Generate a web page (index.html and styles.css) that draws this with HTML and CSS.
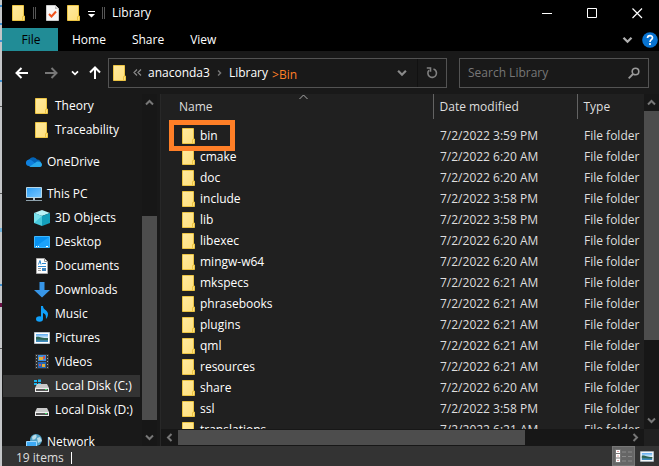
FILE: index.html
```html
<!DOCTYPE html>
<html lang="en">
<head>
<meta charset="utf-8">
<title>Library</title>
<link rel="stylesheet" href="styles.css">
</head>
<body>
<svg class="defs" aria-hidden="true">
  <defs>
    <linearGradient id="paper" x1="0" y1="0" x2="1" y2="1"><stop offset="0" stop-color="#ffeaa0"/><stop offset="1" stop-color="#ffdf7a"/></linearGradient>
    <linearGradient id="sky" x1="0" y1="0" x2="1" y2="1"><stop offset="0" stop-color="#2b9df4"/><stop offset="1" stop-color="#7cc8ff"/></linearGradient>
    <linearGradient id="photo" x1="0" y1="0" x2="0" y2="1"><stop offset="0" stop-color="#5aa9f0"/><stop offset=".5" stop-color="#d9eefa"/><stop offset=".55" stop-color="#35705c"/><stop offset="1" stop-color="#3f8fd0"/></linearGradient>
    <symbol id="folder" viewBox="0 0 14 16"><path d="M.5.5h11v10.500h1v4.500H.5z" fill="url(#paper)" stroke="#ecc443"/><path d="M10.500 15V11.500h1V8" fill="none" stroke="#ecc443"/></symbol>
    <symbol id="up" viewBox="0 0 9 7"><path d="M1 5.500l3.500-3.500L8 5.500" fill="none" stroke="currentColor" stroke-width="2"/></symbol>
    <symbol id="down" viewBox="0 0 9 7"><path d="M1 1.500L4.500 5 8 1.500" fill="none" stroke="currentColor" stroke-width="2"/></symbol>
    <symbol id="left" viewBox="0 0 7 9"><path d="M5.500 1L2 4.500 5.500 8" fill="none" stroke="currentColor" stroke-width="2"/></symbol>
    <symbol id="right" viewBox="0 0 7 9"><path d="M1.500 1L5 4.500 1.500 8" fill="none" stroke="currentColor" stroke-width="2"/></symbol>
    <symbol id="picture" viewBox="0 0 16 12"><path d="M.5.5h15v11H.5z" fill="#fff" stroke="#b9c4cc"/><path d="M2 2h12v8H2z" fill="url(#photo)"/><path d="M2 5c3-1 5 1 12 1.500V8C9 8 5 7 2 7z" fill="#2d6353"/></symbol>
    <symbol id="drive" viewBox="0 0 16 9"><path d="M3 0h10l2 4H1z" fill="#c9c9c9"/><path d="M1 4h14v4H1z" fill="#eee"/><path d="M2 5h12v2H2z" fill="#555"/><path d="M11 5h2v1h-2z" fill="#3fe069"/></symbol>
  </defs>
</svg>
<div class="desktop">
<main class="window">
  <header class="titlebar">
    <svg class="folder"><use href="#folder"/></svg>
    <span class="divider"></span>
    <button class="quick" aria-label="Properties"><svg width="13" height="16" viewBox="0 0 13 16"><path d="M.5.5h9l3 3v12H.5z" fill="#f7f7f7" stroke="#ccc"/><path d="M9 1v3h3z" fill="#bbb"/><path d="M3 9l2.500 2.500L10 6.500" fill="none" stroke="#f0521c" stroke-width="2"/></svg></button>
    <button class="quick" aria-label="New folder"><svg class="folder"><use href="#folder"/></svg></button>
    <button class="quick customize" aria-label="Customize toolbar"><svg width="7" height="7" viewBox="0 0 7 7"><path d="M0 0h7v1H0zM0 3h7L3.500 6.500z" fill="#fff"/></svg></button>
    <span class="divider"></span>
    <h1>Library</h1>
    <div class="controls">
      <button aria-label="Minimize"><svg width="11" height="11"><path d="M0 5.500h10" stroke="#fff"/></svg></button>
      <button aria-label="Maximize"><svg width="11" height="11"><path d="M.5.5h9v9h-9z" fill="none" stroke="#fff"/></svg></button>
      <button aria-label="Close"><svg width="11" height="11"><path d="M.5.5l9.500 9.500M10 .5L.5 10" stroke="#fff" stroke-width="1.200"/></svg></button>
    </div>
  </header>
  <nav class="tabs" aria-label="Ribbon">
    <button class="tab file">File</button>
    <button class="tab">Home</button>
    <button class="tab">Share</button>
    <button class="tab">View</button>
    <button class="expand" aria-label="Expand ribbon"><svg width="11" height="8"><use href="#down"/></svg></button>
    <button class="help" aria-label="Help"><svg width="16" height="16" viewBox="0 0 16 16"><circle cx="8" cy="8" r="7.800" fill="#0873d1"/><path d="M5.500 6c0-3.300 5-3.200 5-.2C10.500 7.800 8 7.600 8 10M8 11v2" fill="none" stroke="#fff" stroke-width="1.700"/></svg></button>
  </nav>
  <div class="navigation">
    <div class="history">
      <button aria-label="Back"><svg width="13" height="12" viewBox="0 0 13 12"><path d="M13 6H1.500M6.500 1l-5 5 5 5" fill="none" stroke="#fff" stroke-width="2"/></svg></button>
      <button aria-label="Forward" class="dim"><svg width="13" height="12" viewBox="0 0 13 12"><path d="M0 6h11.500M6.500 1l5 5-5 5" fill="none" stroke="currentColor" stroke-width="2"/></svg></button>
      <button aria-label="Recent locations" class="recent"><svg width="8" height="6"><use href="#down"/></svg></button>
      <button aria-label="Up"><svg width="12" height="13" viewBox="0 0 12 13"><path d="M6 13V1.500M1 6.500l5-5 5 5" fill="none" stroke="#fff" stroke-width="2"/></svg></button>
    </div>
    <div class="address">
      <svg class="folder"><use href="#folder"/></svg>
      <svg class="more" width="9" height="7" viewBox="0 0 9 7"><path d="M4 .5l-3 3 3 3M8 .5l-3 3 3 3" fill="none" stroke="#8a8a8a" stroke-width="1.200"/></svg>
      <a href="#">anaconda3</a>
      <svg class="crumb" width="5" height="8"><use href="#right"/></svg>
      <a href="#">Library</a>
      <span class="note">&gt;Bin</span>
      <button class="drop" aria-label="Previous locations"><svg width="10" height="8"><use href="#down"/></svg></button>
      <button class="refresh" aria-label="Refresh"><svg width="12" height="12" viewBox="0 0 12 12"><path d="M7.500 2A4.300 4.300 0 1 1 3 3.200M.8 1h3.700v3.700" fill="none" stroke="#808080" stroke-width="1.600"/></svg></button>
    </div>
    <div class="search">
      <input type="search" placeholder="Search Library" aria-label="Search Library">
      <svg width="12" height="12" viewBox="0 0 12 12"><circle cx="7.500" cy="4.500" r="3.300" fill="none" stroke="#9a9a9a" stroke-width="1.600"/><path d="M5 7L.7 11.300" stroke="#9a9a9a" stroke-width="1.800"/></svg>
    </div>
  </div>
  <div class="content">
    <nav class="tree" aria-label="Folders">
      <ul>
        <li class="deep"><a href="#"><svg class="folder"><use href="#folder"/></svg>Theory</a></li>
        <li class="deep"><a href="#"><svg class="folder"><use href="#folder"/></svg>Traceability</a></li>
        <li class="group"><a href="#"><svg viewBox="0 0 16 16"><path d="M2 9a4 4 0 0 1 1.500-4A4.500 4.500 0 0 1 11 5.500 4 4 0 0 1 15 9z" fill="#0364b8"/><path d="M0 10a3.500 3.500 0 0 1 5-4l8 6H3a3 3 0 0 1-3-2z" fill="#0f80dd"/><path d="M3 13l8-5.500c3-.5 5 1 5 3s-1 2.500-3 2.500z" fill="#28a8ea"/></svg>OneDrive</a></li>
        <li class="group"><a href="#"><svg viewBox="0 0 16 16"><path d="M.5 1.500h15v10H.5z" fill="url(#sky)" stroke="#b9d7e6"/><path d="M7 12h2v2h4v1H3v-1h4z" fill="#b8c5cc"/><path d="M0 14h16v1H0z" fill="#8fa2ad"/></svg>This PC</a></li>
        <li class="deep"><a href="#"><svg viewBox="0 0 16 16"><path d="M0 3l8-3 8 3-8 3z" fill="#b7f2f7"/><path d="M0 3l8 3v10l-8-3z" fill="#48c8dc"/><path d="M16 3L8 6v10l8-3z" fill="#139fbb"/><path d="M0 3l8 3-8 7z" fill="#79e1ec"/></svg>3D Objects</a></li>
        <li class="deep"><a href="#"><svg viewBox="0 0 16 16"><path d="M.5 2.500h15v11H.5z" fill="#0791f0" stroke="#3cb7ff"/><path d="M1 13L15 3v10z" fill="#1ca2fb"/><path d="M2 12.500h1m1 0h1m7 0h2" stroke="#fff"/></svg>Desktop</a></li>
        <li class="deep"><a href="#"><svg viewBox="0 0 16 16"><path d="M2.500.5h8l3 3v12h-11z" fill="#fff" stroke="#aaa"/><path d="M10.500.5v3h3" fill="none" stroke="#999"/><path d="M4.500 6.500l1.500-4 1 4M8 5.500h4M4 8.500h8" fill="none" stroke="#2c87ce"/><path d="M4 10.500h3m-3 2h3" stroke="#999"/><path d="M8 10h4v3H8z" fill="#3f84bd"/></svg>Documents</a></li>
        <li class="deep"><a href="#"><svg viewBox="0 0 16 16"><path d="M5.500 0h5v8H16l-8 7.500L0 8h5.500z" fill="#3796e8"/></svg>Downloads</a></li>
        <li class="deep"><a href="#"><svg viewBox="0 0 16 16"><ellipse cx="5.500" cy="13" rx="3.500" ry="2.800" fill="#10a0fa"/><path d="M7 0h2c0 4 5 4 5 8 0 2-1 4-2 5 0-3 0-5-3-6v6H7z" fill="#10a0fa"/></svg>Music</a></li>
        <li class="deep"><a href="#"><svg><use href="#picture"/></svg>Pictures</a></li>
        <li class="deep"><a href="#"><svg viewBox="0 0 16 16"><path d="M1 0h14v15H1z" fill="#333"/><path d="M4 1h8v6H4z" fill="#3c8ee0"/><path d="M4 8h8v6H4z" fill="#2266b7"/><path d="M5 3h4v3H5zM8 10h3v3H8z" fill="#e0ad36"/><path d="M9 2h2v3H9zM5 10h2v2H5z" fill="#c65158"/><path d="M2.500 1v14M13.500 1v14" stroke="#aaa" stroke-dasharray="1 2"/></svg>Videos</a></li>
        <li class="deep selected"><a href="#" aria-current="page"><svg viewBox="0 0 16 16"><path d="M0 2h3v2H0zM4 1.500h3V4H4zM0 5h3v2H0zM4 5h3v2.500H4z" fill="#18b5f1"/><use href="#drive" y="6" width="16" height="9"/></svg>Local Disk (C:)</a></li>
        <li class="deep"><a href="#"><svg viewBox="0 0 16 16"><use href="#drive" y="6" width="16" height="9"/></svg>Local Disk (D:)</a></li>
        <li class="group"><a href="#"><svg viewBox="0 0 16 16"><circle cx="10" cy="6" r="6" fill="#4e9fc4"/><path d="M6 3c3-4 6-2 4 1s-4 0-3 4M11 4l3-1 2 4-4 2z" fill="#b9dce8"/><path d="M.5 7.500h10v7H.5z" fill="#3daaf6" stroke="#9dd8ff"/></svg>Network</a></li>
      </ul>
      <div class="vbar" aria-hidden="true"><svg><use href="#up"/></svg><span class="lead"></span><span class="thumb"></span><span class="rest"></span><svg><use href="#down"/></svg></div>
    </nav>
    <section class="files">
      <div class="pane">
        <div class="list">
          <svg class="sort" width="9" height="6" viewBox="0 0 9 6"><path d="M.5 5l4-4 4 4" fill="none" stroke="#aaa"/></svg>
          <table>
            <thead><tr><th class="name">Name</th><th class="date">Date modified</th><th class="type">Type</th></tr></thead>
            <tbody>
              <tr><td><span class="item marked"><svg class="folder"><use href="#folder"/></svg>bin</span></td><td>7/2/2022 3:59 PM</td><td>File folder</td></tr>
              <tr><td><span class="item"><svg class="folder"><use href="#folder"/></svg>cmake</span></td><td>7/2/2022 6:20 AM</td><td>File folder</td></tr>
              <tr><td><span class="item"><svg class="folder"><use href="#folder"/></svg>doc</span></td><td>7/2/2022 6:20 AM</td><td>File folder</td></tr>
              <tr><td><span class="item"><svg class="folder"><use href="#folder"/></svg>include</span></td><td>7/2/2022 3:58 PM</td><td>File folder</td></tr>
              <tr><td><span class="item"><svg class="folder"><use href="#folder"/></svg>lib</span></td><td>7/2/2022 3:58 PM</td><td>File folder</td></tr>
              <tr><td><span class="item"><svg class="folder"><use href="#folder"/></svg>libexec</span></td><td>7/2/2022 6:20 AM</td><td>File folder</td></tr>
              <tr><td><span class="item"><svg class="folder"><use href="#folder"/></svg>mingw-w64</span></td><td>7/2/2022 6:20 AM</td><td>File folder</td></tr>
              <tr><td><span class="item"><svg class="folder"><use href="#folder"/></svg>mkspecs</span></td><td>7/2/2022 6:21 AM</td><td>File folder</td></tr>
              <tr><td><span class="item"><svg class="folder"><use href="#folder"/></svg>phrasebooks</span></td><td>7/2/2022 6:21 AM</td><td>File folder</td></tr>
              <tr><td><span class="item"><svg class="folder"><use href="#folder"/></svg>plugins</span></td><td>7/2/2022 6:21 AM</td><td>File folder</td></tr>
              <tr><td><span class="item"><svg class="folder"><use href="#folder"/></svg>qml</span></td><td>7/2/2022 6:21 AM</td><td>File folder</td></tr>
              <tr><td><span class="item"><svg class="folder"><use href="#folder"/></svg>resources</span></td><td>7/2/2022 6:21 AM</td><td>File folder</td></tr>
              <tr><td><span class="item"><svg class="folder"><use href="#folder"/></svg>share</span></td><td>7/2/2022 6:20 AM</td><td>File folder</td></tr>
              <tr><td><span class="item"><svg class="folder"><use href="#folder"/></svg>ssl</span></td><td>7/2/2022 3:58 PM</td><td>File folder</td></tr>
              <tr><td><span class="item"><svg class="folder"><use href="#folder"/></svg>translations</span></td><td>7/2/2022 6:21 AM</td><td>File folder</td></tr>
            </tbody>
          </table>
        </div>
        <div class="vbar" aria-hidden="true"><svg><use href="#up"/></svg><span class="thumb"></span><span class="rest"></span><svg><use href="#down"/></svg></div>
      </div>
      <div class="hbar" aria-hidden="true"><svg><use href="#left"/></svg><span class="thumb"></span><span class="rest"></span><svg><use href="#right"/></svg><span class="corner"></span></div>
    </section>
  </div>
  <footer class="status">
    <span class="count">19 items</span>
    <button class="view active" aria-label="Details view"><svg width="18" height="14" viewBox="0 0 18 14"><path d="M1 1h4v12H1z" fill="#fff"/><path d="M1 4.500h4M1 9h4M.5.500h5v13h-5z" fill="none" stroke="#777"/><path d="M2.500 2h1v1h-1zM2.500 6.500h1v1h-1zM2.500 11h1v1h-1z" fill="#b44"/><path d="M7 3h4m2 0h4M7 7.500h4m2 0h4M7 12h4m2 0h4" stroke="#8b8b8b"/></svg></button>
    <button class="view" aria-label="Large icons view"><svg width="14" height="11"><use href="#picture"/></svg></button>
  </footer>
</main>
</div>
</body>
</html>
```
FILE: styles.css
```css
* { box-sizing: border-box; }
body { margin: 0; font: 12px/16px "Open Sans", "Noto Sans", sans-serif; color: #fff; }
button, input { font: inherit; color: inherit; background: none; border: 0; padding: 0; margin: 0; }
button { display: flex; align-items: center; justify-content: center; }
a { color: inherit; text-decoration: none; }
svg { display: block; flex: none; }
.defs { position: absolute; width: 0; height: 0; }
.folder { width: 14px; height: 16px; }
.desktop {
  height: 100vh;
  padding-left: 2px;
  background:
    linear-gradient(#3d8fd0, #3d8fd0) 0 5px / 2px 2px no-repeat,
    linear-gradient(#3d8fd0, #3d8fd0) 0 23px / 2px 2px no-repeat,
    linear-gradient(#3d8fd0, #3d8fd0) 0 40px / 2px 2px no-repeat,
    linear-gradient(#3d8fd0, #3d8fd0) 0 80px / 2px 2px no-repeat,
    linear-gradient(#555, #555) 0 106px / 2px 1px no-repeat,
    linear-gradient(#555, #555) 0 193px / 2px 1px no-repeat,
    linear-gradient(#6fb3dc, #6fb3dc) 0 228px / 2px 4px no-repeat,
    linear-gradient(#3d8fd0, #3d8fd0) 0 284px / 2px 2px no-repeat,
    linear-gradient(#6b0f45, #6b0f45) 0 303px / 2px 4px no-repeat,
    linear-gradient(#555, #555) 0 348px / 2px 1px no-repeat,
    #c4c6c8;
}
.window { display: flex; flex-direction: column; height: 100%; background: #191919; overflow: hidden; }

.titlebar { display: flex; align-items: center; height: 28px; flex: none; padding: 0 0 2px 10px; background: #000; }
.divider { width: 3px; height: 12px; margin: 0 10px 0 7px; border: 1px solid #555; border-width: 0 1px; }
.quick { margin-right: 8px; }
.customize { margin: 3px 0 0 -1px; }
h1 { margin: 0 auto 0 -3px; font: inherit; }
.controls { display: flex; gap: 2px; }
.controls button { width: 43px; height: 26px; }

.tabs { display: flex; align-items: center; height: 23px; flex: none; padding-right: 1px; background: #000; }
.tab { height: 23px; padding: 0 12px 0 14px; }
.tab.file { width: 56px; background: #218c96; color: #000; }
.expand { margin-left: auto; color: #b0b0b0; }
.help { margin-left: 9px; }

.navigation { display: flex; align-items: center; height: 43px; flex: none; padding: 0 10px 0 13px; }
.history { display: flex; align-items: center; gap: 17px; width: 93px; }
.dim { color: #777; }
.recent { margin-right: -7px; margin-left: -4px; }
.address { display: flex; align-items: center; flex: 1; min-width: 0; height: 30px; padding-left: 4px; border: 1px solid #535353; }
.more { margin: 0 6px; }
.crumb { margin: 0 7px; color: #777; }
.note { align-self: flex-end; margin: 0 0 4px 4px; color: #ff7f27; }
.drop { margin: 0 10px 0 auto; color: #8a8a8a; }
.refresh { width: 29px; height: 28px; border-left: 1px solid #111; }
.search { display: flex; align-items: center; width: 190px; height: 30px; margin-left: 12px; padding: 0 8px; border: 1px solid #535353; }
.search input { flex: 1; min-width: 0; outline: 0; }
.search input::placeholder { color: #777; opacity: 1; }

.content { display: flex; flex: 1; min-height: 0; }
.tree { display: flex; width: 158px; flex: none; overflow: hidden; }
.tree ul { flex: 1; margin: 0; padding: 0 2px 0 1px; list-style: none; }
.tree li { display: flow-root; }
.tree a { display: flex; align-items: center; gap: 5px; height: 22px; margin: 1px 0; padding-left: 23px; white-space: nowrap; }
.tree a svg { width: 16px; height: 16px; }
.tree .deep a { padding-left: 31px; }
.tree .selected a { background: #333; }
.tree .group { padding-top: 8px; }

.vbar { display: flex; flex-direction: column; align-items: center; width: 15px; flex: none; padding: 5px 0; background: #171717; color: #777; }
.vbar svg { width: 9px; height: 7px; }
.thumb { background: #4d4d4d; }
.vbar .thumb { width: 15px; }
.tree .vbar { margin-right: 3px; }
.tree .lead { flex: 110; }
.tree .thumb { flex: 204; }
.tree .rest { flex: 14; }

.files { display: flex; flex-direction: column; flex: 1; min-width: 0; border-left: 1px solid #282828; background: #202020; }
.pane { display: flex; flex: 1; min-height: 0; }
.list { position: relative; flex: 1; min-width: 0; overflow: hidden; }
.sort { position: absolute; top: 0; left: 138px; }
table { width: 100%; border-collapse: collapse; table-layout: fixed; white-space: nowrap; }
th { height: 25px; padding: 0 0 0 6px; border-left: 1px solid #636363; font-weight: 400; text-align: left; color: #dedede; }
th.name { width: 272px; padding-left: 18px; border: 0; }
th.date { width: 144px; }
thead::after { content: ""; display: block; height: 6px; }
td { height: 21px; padding: 0 0 0 7px; color: #dedede; }
td:first-child { padding-left: 21px; color: #fff; }
.item { display: inline-flex; align-items: center; gap: 4px; height: 21px; vertical-align: top; }
.marked { position: relative; }
.marked::after { content: ""; position: absolute; inset: -5px -17px -5px -13px; border: 5px solid #ff7f27; }
.pane .thumb { flex: 228; }
.pane .rest { flex: 77; }
.pane .vbar svg:first-child { margin-bottom: 5px; }

.hbar { display: flex; align-items: center; height: 17px; flex: none; background: #171717; color: #777; }
.hbar svg { width: 7px; height: 9px; margin: 0 5px; }
.hbar .thumb { height: 15px; flex: 345; }
.hbar .rest { flex: 102; }
.corner { width: 15px; height: 17px; background: #202020; }

.status { display: flex; align-items: center; height: 20px; flex: none; padding-right: 1px; background: #333; color: #dedede; }
.count { margin: 3px auto 0 14px; padding-right: 7px; border-right: 1px solid #fff; line-height: 12px; }
.view { width: 23px; height: 20px; }
.view.active { background: #666; border: 1px solid #777; }
```
